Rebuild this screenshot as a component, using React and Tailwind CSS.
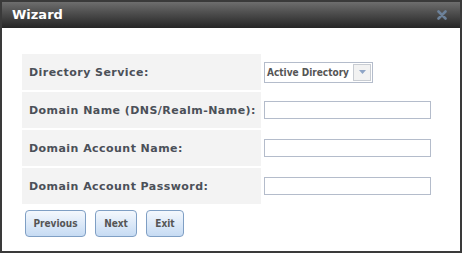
import React from 'react';

const labels = [
  'Directory Service:',
  'Domain Name (DNS/Realm-Name):',
  'Domain Account Name:',
  'Domain Account Password:',
];

function Field({ index }) {
  if (index === 0) {
    return (
      <div className="flex h-[21px] w-[109px] items-stretch border border-[#b4bccb] bg-white">
        <span className="flex flex-1 items-center px-[2px] font-['DejaVu_Sans_Condensed',sans-serif] text-[10px] font-bold text-[#555]">
          Active Directory
        </span>
        <span className="m-px flex w-[18px] items-center justify-center border border-[#c8ccd2] bg-[#f2f2f2]">
          <svg width="7" height="4" viewBox="0 0 7 4">
            <path d="M0 0h7L3.5 4z" fill="#8fa5c6" />
          </svg>
        </span>
      </div>
    );
  }
  return <div className="h-[18px] w-[167px] border border-[#b4bccb] bg-white" />;
}

function Button({ children, w }) {
  return (
    <button
      className={`flex h-[27px] ${w} items-center justify-center rounded-[4px] border border-[#7f9fc4] bg-gradient-to-b from-[#f4f8fd] to-[#c6dbf3] font-['DejaVu_Sans_Condensed',sans-serif] text-[10px] font-bold text-[#555]`}
    >
      {children}
    </button>
  );
}

export default function App() {
  return (
    <div className="h-[253px] w-[462px] bg-white font-['DejaVu_Sans',sans-serif]">
      <div className="flex h-full w-full flex-col border-2 border-[#3a3a3a]">
        {/* Title bar */}
        <div className="flex h-[26px] items-center justify-between bg-gradient-to-b from-[#6e6e6e] to-[#262626] pl-[10px] pr-[13px]">
          <span className="text-[13px] font-bold text-white">Wizard</span>
          <svg width="10" height="10" viewBox="0 0 10 10">
            <path d="M1.5 1.5L8.5 8.5M8.5 1.5L1.5 8.5" stroke="#6c8199" strokeWidth="2.6" strokeLinecap="round" />
          </svg>
        </div>

        {/* Body */}
        <div className="flex flex-col pl-[20px] pt-[26px]">
          <div className="flex flex-col gap-[2px]">
            {labels.map((label, i) => (
              <div key={label} className="flex h-[36px] items-center">
                <div className="flex h-full w-[239px] items-center bg-[#f3f3f3] pl-[7px] pt-[3px] text-[11px] font-bold tracking-[0.45px] text-[#4b5058]">
                  {label}
                </div>
                <div className="pl-[3px]">
                  <Field index={i} />
                </div>
              </div>
            ))}
          </div>
          <div className="mt-[6px] flex gap-[9px] pl-[3px]">
            <Button w="w-[61px]">Previous</Button>
            <Button w="w-[42px]">Next</Button>
            <Button w="w-[38px]">Exit</Button>
          </div>
        </div>
      </div>
    </div>
  );
}
